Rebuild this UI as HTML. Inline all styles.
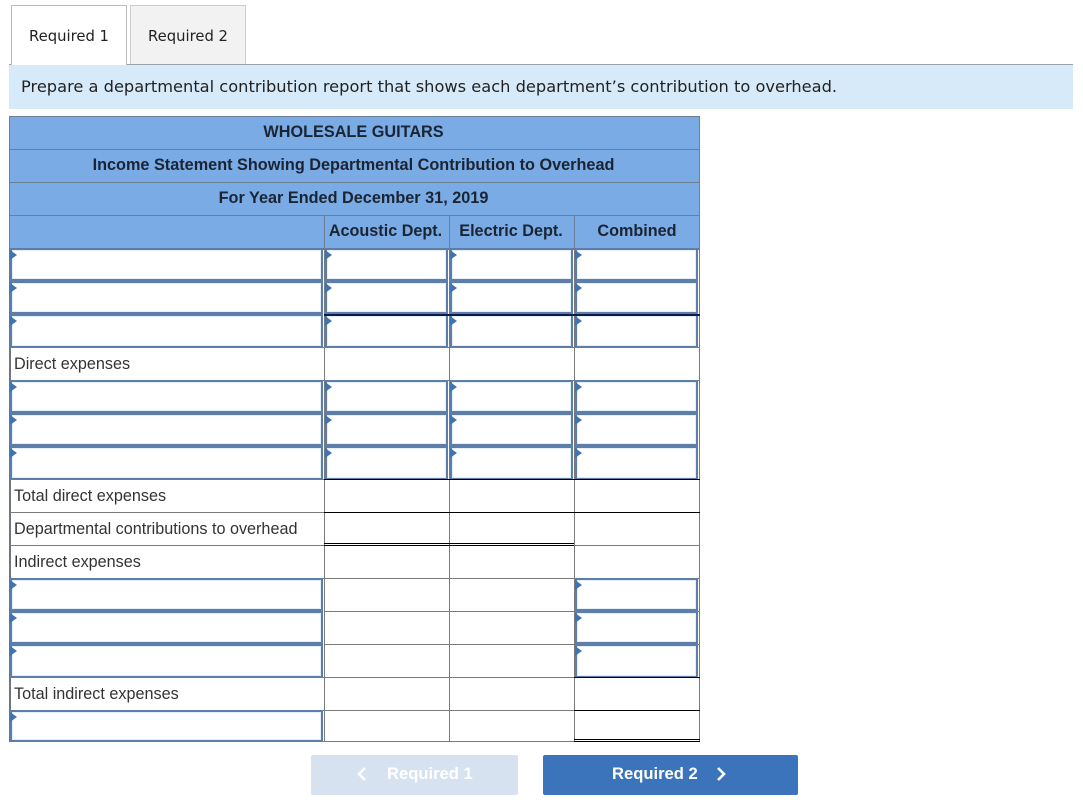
<!DOCTYPE html>
<html><head><meta charset="utf-8">
<style>
html,body{margin:0;padding:0;background:#fff;width:1083px;height:804px;overflow:hidden;position:relative;font-family:"Liberation Sans",Arial,sans-serif;color:#222}
div{position:absolute;box-sizing:border-box}
.tab{top:5px;height:60px;font:14.8px "DejaVu Sans",sans-serif;text-align:center;line-height:61px;color:#222}
.h{background:#7aabe4;left:9px;width:691px;height:34px;border:1px solid #6b7f96;text-align:center;font-weight:bold;font-size:16.25px;line-height:31px;color:#1a2433;padding-right:2px}
.c{top:215px;width:126px;height:34px;border:1px solid #6b7f96;text-align:center;font-weight:bold;font-size:16.2px;line-height:31px;color:#1a2433;white-space:nowrap}
.hl{position:absolute;background:#7a7a7a}
.l{left:14px;font-size:16.2px;line-height:20px;color:#333;white-space:nowrap}
.i{border:2px solid #5c7ea8;background:#fff;height:33px;box-shadow:inset 0 0 0 1px #e4effb}
.i:before{content:"";position:absolute;left:-2px;top:0;border-left:7px solid #3f74b0;border-top:5px solid transparent;border-bottom:5px solid transparent}
.k{background:#000;height:2px}
</style></head><body>

<div style="left:9px;top:64px;width:1064px;height:1px;background:#9aa3ac"></div>
<div class="tab" style="left:11px;width:116px;background:#fff;border:1px solid #bbb;border-bottom:none;height:60px;z-index:2">Required 1</div>
<div class="tab" style="left:130px;width:116px;background:#f2f2f2;border:1px solid #ccc;border-bottom:none;height:59px">Required 2</div>
<div style="left:9px;top:65px;width:1064px;height:44px;background:#d7eafa;font:16.24px/44px 'DejaVu Sans',sans-serif;padding-left:12px;color:#222;white-space:nowrap">Prepare a departmental contribution report that shows each department’s contribution to overhead.</div>

<div class="h" style="top:116px">WHOLESALE GUITARS</div>
<div class="h" style="top:149px">Income Statement Showing Departmental Contribution to Overhead</div>
<div class="h" style="top:182px">For Year Ended December 31, 2019</div>
<div class="h" style="top:215px"></div>
<div class="c" style="left:324px;padding-right:3px">Acoustic Dept.</div>
<div class="c" style="left:449px;padding-right:2px">Electric Dept.</div>
<div class="c" style="left:574px">Combined</div>
<div style="left:9px;top:248px;width:691px;height:2px;background:#5f7a9c"></div>

<!-- grid -->
<div class="hl" style="left:9px;top:248px;width:2px;height:494px;background:#6f7680"></div>
<div class="hl" style="left:324px;top:248px;width:1px;height:494px"></div>
<div class="hl" style="left:449px;top:248px;width:1px;height:494px"></div>
<div class="hl" style="left:574px;top:248px;width:1px;height:494px"></div>
<div class="hl" style="left:699px;top:248px;width:1px;height:494px"></div>
<div class="hl" style="left:9px;top:347px;width:691px;height:1px"></div>
<div class="hl" style="left:9px;top:380px;width:691px;height:1px"></div>
<div class="hl" style="left:9px;top:479px;width:691px;height:1px"></div>
<div class="hl" style="left:9px;top:512px;width:691px;height:1px"></div>
<div class="hl" style="left:9px;top:545px;width:691px;height:1px"></div>
<div class="hl" style="left:9px;top:578px;width:691px;height:1px"></div>
<div class="hl" style="left:324px;top:611px;width:376px;height:1px"></div>
<div class="hl" style="left:324px;top:644px;width:376px;height:1px"></div>
<div class="hl" style="left:9px;top:677px;width:691px;height:1px"></div>
<div class="hl" style="left:9px;top:710px;width:691px;height:1px"></div>
<div class="hl" style="left:9px;top:741px;width:566px;height:1px"></div>

<div class="l" style="top:354px">Direct expenses</div>
<div class="l" style="top:486px">Total direct expenses</div>
<div class="l" style="top:519px">Departmental contributions to overhead</div>
<div class="l" style="top:552px">Indirect expenses</div>
<div class="l" style="top:684px">Total indirect expenses</div>

<!-- row 1-3 -->
<div class="i" style="left:10px;top:248px;width:313px"></div>
<div class="i" style="left:325px;top:248px;width:123px"></div>
<div class="i" style="left:450px;top:248px;width:123px"></div>
<div class="i" style="left:575px;top:248px;width:123px"></div>
<div class="i" style="left:10px;top:281px;width:313px"></div>
<div class="i" style="left:325px;top:281px;width:123px"></div>
<div class="i" style="left:450px;top:281px;width:123px"></div>
<div class="i" style="left:575px;top:281px;width:123px"></div>
<div class="i" style="left:10px;top:314px;width:313px;height:34px"></div>
<div class="i" style="left:325px;top:314px;width:123px;height:34px"></div>
<div class="i" style="left:450px;top:314px;width:123px;height:34px"></div>
<div class="i" style="left:575px;top:314px;width:123px;height:34px"></div>
<div style="left:324px;top:314px;width:376px;height:2px;background:#101a4a"></div>

<!-- row 5-7 -->
<div class="i" style="left:10px;top:380px;width:313px"></div>
<div class="i" style="left:325px;top:380px;width:123px"></div>
<div class="i" style="left:450px;top:380px;width:123px"></div>
<div class="i" style="left:575px;top:380px;width:123px"></div>
<div class="i" style="left:10px;top:413px;width:313px"></div>
<div class="i" style="left:325px;top:413px;width:123px"></div>
<div class="i" style="left:450px;top:413px;width:123px"></div>
<div class="i" style="left:575px;top:413px;width:123px"></div>
<div class="i" style="left:10px;top:446px;width:313px;height:34px"></div>
<div class="i" style="left:325px;top:446px;width:123px;height:34px"></div>
<div class="i" style="left:450px;top:446px;width:123px;height:34px"></div>
<div class="i" style="left:575px;top:446px;width:123px;height:34px"></div>

<!-- black rules -->
<div class="k" style="left:324px;top:479px;width:376px;height:1px"></div>
<div class="k" style="left:324px;top:512px;width:376px;height:1px"></div>
<div class="k" style="left:324px;top:543px;width:250px;height:1px"></div>
<div class="k" style="left:324px;top:545px;width:250px;height:1px"></div>

<!-- indirect -->
<div class="i" style="left:10px;top:578px;width:313px"></div>
<div class="i" style="left:575px;top:578px;width:123px"></div>
<div class="i" style="left:10px;top:611px;width:313px"></div>
<div class="i" style="left:575px;top:611px;width:123px"></div>
<div class="i" style="left:10px;top:644px;width:313px;height:34px"></div>
<div class="i" style="left:575px;top:644px;width:123px;height:34px"></div>
<div class="k" style="left:574px;top:677px;width:126px;height:1px"></div>
<div class="k" style="left:574px;top:710px;width:126px;height:1px"></div>
<div class="k" style="left:574px;top:739px;width:126px;height:1px"></div>
<div class="k" style="left:574px;top:741px;width:126px;height:1px"></div>
<div class="i" style="left:10px;top:710px;width:313px;height:32px"></div>

<!-- buttons -->
<div style="left:311px;top:755px;width:207px;height:40px;background:#d7e2f0;border-radius:2px;color:#fff;font-weight:bold;font-size:16.6px;line-height:38px;padding-left:76px">Required 1</div>
<svg style="position:absolute;left:355px;top:766px" width="14" height="16" viewBox="0 0 14 16"><path d="M10 2 L4 8 L10 14" fill="none" stroke="#fff" stroke-width="2.6"/></svg>
<div style="left:543px;top:755px;width:255px;height:40px;background:#3b74ba;border-radius:2px;color:#fff;font-weight:bold;font-size:16.6px;line-height:38px;padding-left:69px">Required 2</div>
<svg style="position:absolute;left:714px;top:766px" width="14" height="16" viewBox="0 0 14 16"><path d="M4 2 L10 8 L4 14" fill="none" stroke="#fff" stroke-width="2.6"/></svg>
</body></html>
